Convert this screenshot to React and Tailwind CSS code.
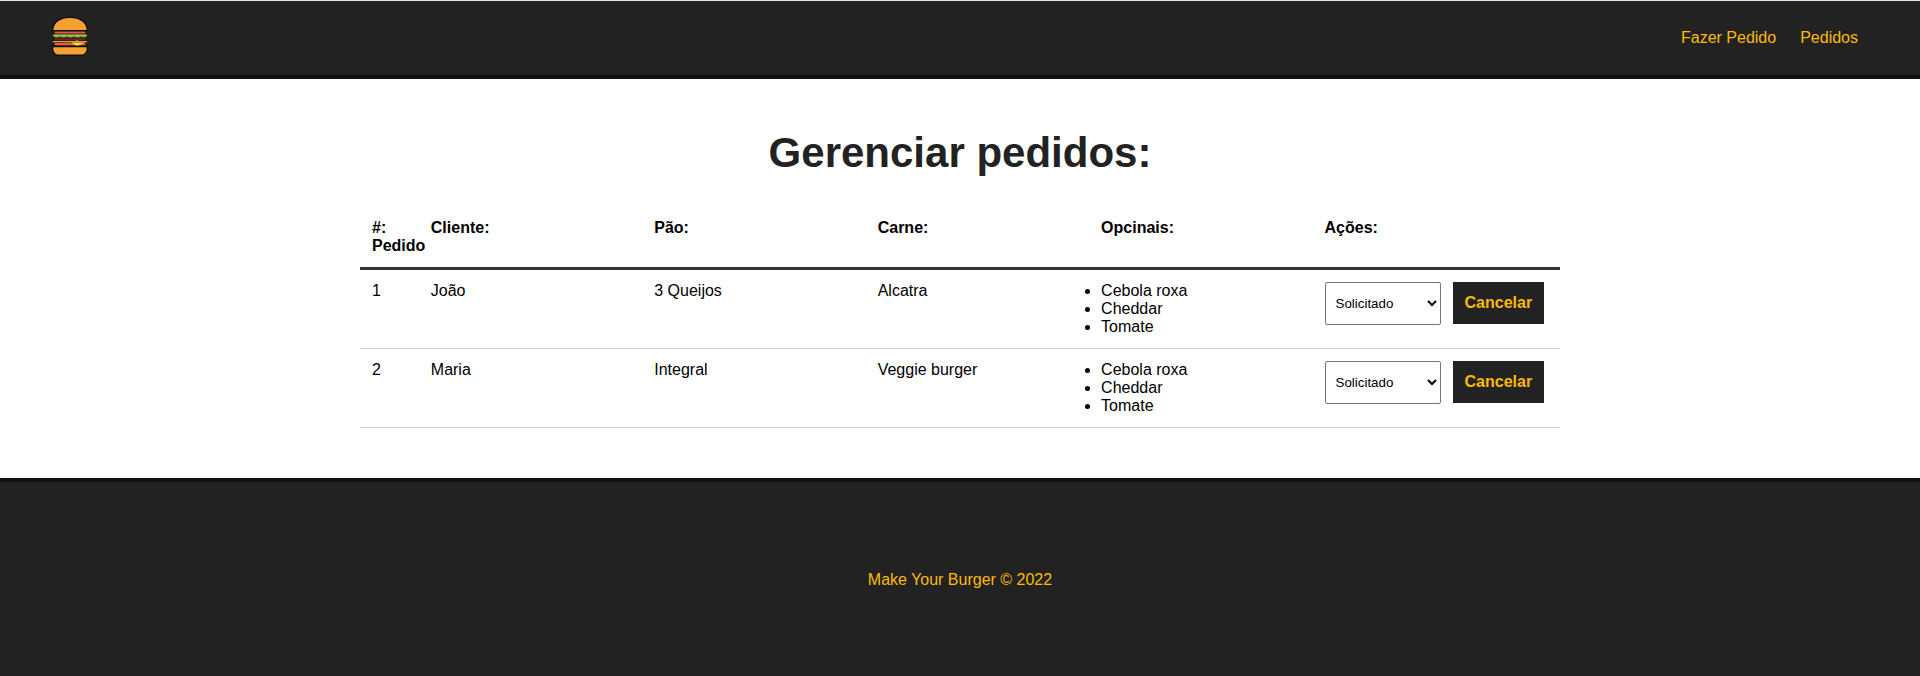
import React from 'react';

const orders = [
  { id: 1, cliente: 'João', pao: '3 Queijos', carne: 'Alcatra', opcionais: ['Cebola roxa', 'Cheddar', 'Tomate'] },
  { id: 2, cliente: 'Maria', pao: 'Integral', carne: 'Veggie burger', opcionais: ['Cebola roxa', 'Cheddar', 'Tomate'] },
];

function BurgerLogo() {
  return (
    <svg viewBox="0 0 40 40" className="block w-10 h-10 mb-1">
      {/* pão de cima */}
      <path d="M2.6 14.8 C2.6 6 10 1.2 20 1.2 C30 1.2 37.4 6 37.4 14.8 Z" fill="#f5a033" stroke="#111" strokeWidth="1.5" strokeLinejoin="round" />
      {/* tomate */}
      <rect x="4" y="15" width="32" height="3.4" fill="#ef5350" stroke="#111" strokeWidth="1.2" />
      {/* carne */}
      <rect x="4" y="20.4" width="32" height="4.8" fill="#6d1f1f" stroke="#111" strokeWidth="1" />
      {/* alface */}
      <path d="M2.8 18 L37.2 18 L37.2 20.4 C35 22 33 22 31 20.8 C29 22.2 26 22.2 24 20.8 C22 22.2 19 22.2 17 20.8 C15 22.2 12 22.2 10 20.8 C8 22.2 5 22 2.8 20.4 Z" fill="#8bc34a" stroke="#111" strokeWidth="0.7" />
      {/* tomate de baixo */}
      <rect x="4" y="26.4" width="32" height="3.6" fill="#ef5350" stroke="#111" strokeWidth="1.2" />
      {/* queijo */}
      <rect x="2.8" y="25" width="34.4" height="1.5" fill="#fdd835" stroke="#111" strokeWidth="0.4" />
      <path d="M21 26.4 L35 26.4 L31 28.6 C29 30 26 30 24.5 28.8 Z" fill="#fdd835" />
      <circle cx="27" cy="24.6" r="0.8" fill="#e8892a" />
      {/* pão de baixo */}
      <path d="M2.6 30.6 L37.4 30.6 C38 35 35.6 39.2 32 39.2 L8 39.2 C4.4 39.2 2 35 2.6 30.6 Z" fill="#f5a033" stroke="#111" strokeWidth="1.5" strokeLinejoin="round" />
    </svg>
  );
}

export default function App() {
  return (
    <div className="h-screen overflow-hidden bg-white font-['Liberation_Sans',Arial,sans-serif] text-base leading-[18px] text-black">
      <nav className="flex items-center justify-between bg-[#222] border-t border-t-[#e5e5e5] border-b-4 border-b-[#111] px-[50px] py-[15px]">
        <a href="#"><BurgerLogo /></a>
        <div className="flex text-[#fcba03]">
          <a href="#" className="p-3">Fazer Pedido</a>
          <a href="#" className="p-3">Pedidos</a>
        </div>
      </nav>

      <main className="pt-[50px] pb-[50px]">
        <h1 className="text-center text-[42px] leading-[48px] font-bold text-[#222] mb-[30px]">Gerenciar pedidos:</h1>

        <div className="w-[1200px] mx-auto">
          <div className="flex p-3 border-b-[3px] border-[#333] font-bold">
            <div className="w-[5%]">#: Pedido</div>
            <div className="w-[19%]">Cliente:</div>
            <div className="w-[19%]">Pão:</div>
            <div className="w-[19%]">Carne:</div>
            <div className="w-[19%]">Opcinais:</div>
            <div className="w-[19%]">Ações:</div>
          </div>

          {orders.map((o) => (
            <div key={o.id} className="flex p-3 border-b border-[#ccc]">
              <div className="w-[5%]">{o.id}</div>
              <div className="w-[19%]">{o.cliente}</div>
              <div className="w-[19%]">{o.pao}</div>
              <div className="w-[19%]">{o.carne}</div>
              <div className="w-[19%]">
                <ul className="list-disc">
                  {o.opcionais.map((op) => <li key={op}>{op}</li>)}
                </ul>
              </div>
              <div className="w-[19%] flex items-start">
                <select className="w-[116px] h-[43px] px-1.5 mr-3 bg-white border border-[#767676] rounded-[2px] text-[13.33px]">
                  <option>Solicitado</option>
                  <option>Em produção</option>
                  <option>Finalizado</option>
                </select>
                <button className="bg-[#222] text-[#fcba03] font-bold p-3">Cancelar</button>
              </div>
            </div>
          ))}
        </div>
      </main>

      <footer className="h-[200px] flex items-center justify-center bg-[#222] border-t-4 border-[#111] text-[#fcba03]">
        <p>Make Your Burger © 2022</p>
      </footer>
    </div>
  );
}
